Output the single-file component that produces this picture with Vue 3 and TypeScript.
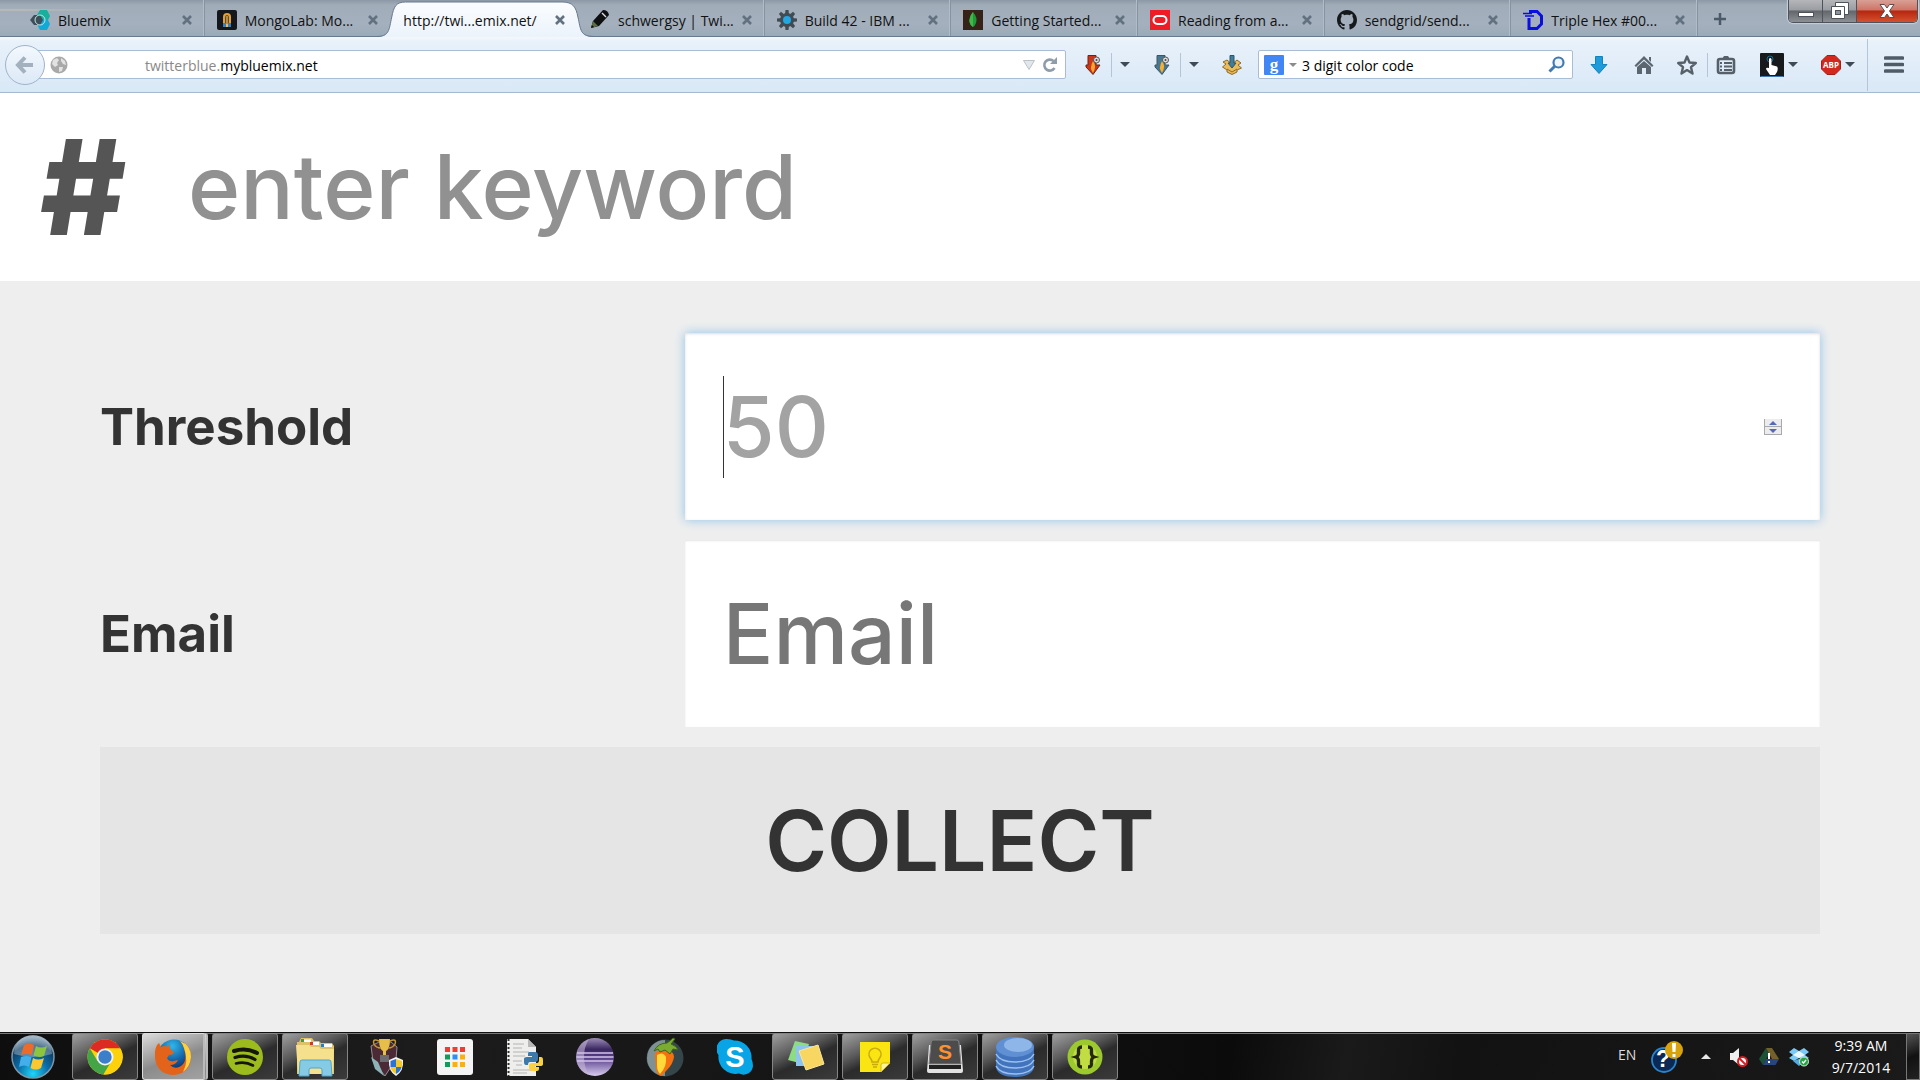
<script setup lang="ts">
import { ref } from 'vue'

interface Tab {
  icon: string
  title: string
  active?: boolean
}

const tabs: Tab[] = [
  { icon: 'bluemix', title: 'Bluemix' },
  { icon: 'mongolab', title: 'MongoLab: Mo...' },
  { icon: '', title: 'http://twi...emix.net/', active: true },
  { icon: 'pencil', title: 'schwergsy | Twi...' },
  { icon: 'gear', title: 'Build 42 - IBM ...' },
  { icon: 'leaf', title: 'Getting Started...' },
  { icon: 'oracle', title: 'Reading from a...' },
  { icon: 'github', title: 'sendgrid/send...' },
  { icon: 'hex', title: 'Triple Hex #00...' },
]

const keyword = ref('')
const threshold = ref('')
const email = ref('')
const search = ref('3 digit color code')
const gearTeeth = [0, 45, 90, 135, 180, 225, 270, 315]
const gridDots = [
  '#f23b32', '#f23b32', '#f23b32',
  '#149a5c', '#2b8ff5', '#fbb010',
  '#149a5c', '#fbb010', '#fbb010',
]

function step(by: number) {
  threshold.value = String(Number(threshold.value || 50) + by)
}
</script>

<template>
  <div class="screen">
    <header class="tabstrip">
      <nav class="tabs" aria-label="Tabs">
        <div v-for="tab in tabs" :key="tab.title" class="tab" :class="{ active: tab.active }">
          <svg v-if="tab.active" class="tab-shape" viewBox="0 0 222 37" preserveAspectRatio="none">
            <defs>
              <linearGradient id="tabFill" x1="0" y1="0" x2="0" y2="1">
                <stop offset="0" stop-color="#fbfdff" />
                <stop offset="1" stop-color="#ebf3fb" />
              </linearGradient>
            </defs>
            <path d="M0 37 C14 37 13 30 16 17 C18 7 20 2 30 2 H189 C200 2 203 7 205 17 C208 30 207 37 222 37 Z" fill="url(#tabFill)" />
            <path d="M0 36.500C14 36.500 13 30 16 17 C18 7 20 2 30 2 H189 C200 2 203 7 205 17 C208 30 207 36.500 222 36.500" fill="none" stroke="#66798d" stroke-width="1" />
          </svg>

          <svg v-if="tab.icon === 'bluemix'" class="fav" viewBox="0 0 20 20">
            <path d="M10 0 H17 L20 6 L18 10 H9 L7 5Z" fill="#17af9f" />
            <path d="M9 10 H18 L20 14 L17 20 H10 L8 16Z" fill="#12a9d6" />
            <path d="M4 5 H10 L13 10 L10 15 H4 L0 10Z" fill="#3d4d5a" />
            <circle cx="10" cy="10" r="5" fill="none" stroke="#bfe6ea" />
          </svg>
          <svg v-else-if="tab.icon === 'mongolab'" class="fav" viewBox="0 0 20 20">
            <rect width="20" height="20" rx="2" fill="#14181c" />
            <path d="M6 17 V7 Q6 3 10 3 Q14 3 14 7 V17Z" fill="#e0a040" />
            <path d="M8 14 V8 Q8 5 10 5 Q12 5 12 8 V14Z" fill="#6b4a20" />
            <path d="M6 13 H9 V17 H6Z M11 13 H14 V17 H11Z" fill="#3e7fb8" />
            <path d="M9.500 6 H10.500 V17 H9.500Z" fill="#f2d090" />
          </svg>
          <svg v-else-if="tab.icon === 'pencil'" class="fav" viewBox="0 0 20 20">
            <path d="M1 18 L3 11 L13 0 Q18 0 19 5 L9 16Z" fill="#0d0f10" />
            <path d="M12 3 L16 7" stroke="#d8dde2" stroke-width="1.500" />
            <path d="M3 11 L8 16 L1 18Z" fill="#5c6c45" />
            <path d="M1 18 L2 15 L4 17Z" fill="#111" />
          </svg>
          <svg v-else-if="tab.icon === 'gear'" class="fav" viewBox="0 0 20 20">
            <g fill="#414b53">
              <path v-for="a in gearTeeth" :key="a" d="M8 5 L8.500 0 H11.500 L12 5Z" :transform="`rotate(${a} 10 10)`" />
            </g>
            <circle cx="10" cy="10" r="5.500" fill="#22a7e0" stroke="#414b53" stroke-width="3" />
          </svg>
          <svg v-else-if="tab.icon === 'leaf'" class="fav" viewBox="0 0 20 20">
            <rect width="20" height="20" fill="#35231a" />
            <path d="M10 2 Q15 8 13 13 Q12 16 10 17 Q7 15 6.500 12 Q6 7 10 2Z" fill="#1f9a3a" />
            <path d="M10 2 Q6 7 6.500 12 Q7 15 10 17Z" fill="#43b649" />
          </svg>
          <svg v-else-if="tab.icon === 'oracle'" class="fav" viewBox="0 0 20 20">
            <rect width="20" height="20" fill="#ee1c25" />
            <rect x="3.500" y="6" width="13" height="8" rx="4" fill="none" stroke="#fff" stroke-width="2" />
          </svg>
          <svg v-else-if="tab.icon === 'github'" class="fav" viewBox="0 0 16 16">
            <path fill="#16191c" d="M8 0C3.580 0 0 3.580 0 8c0 3.540 2.290 6.530 5.470 7.590.4.070.55-.17.55-.38 0-.19-.01-.82-.01-1.490-2.010.37-2.530-.49-2.690-.94-.09-.23-.48-.94-.82-1.130-.28-.15-.68-.52-.01-.53.63-.01 1.080.58 1.230.82.72 1.210 1.870.87 2.330.66.07-.52.28-.87.51-1.070-1.780-.2-3.640-.89-3.640-3.950 0-.87.31-1.590.82-2.150-.08-.2-.36-1.020.08-2.120 0 0 .67-.21 2.200.82.64-.18 1.320-.27 2-.27s1.360.09 2 .27c1.530-1.040 2.200-.82 2.200-.82.44 1.100.16 1.920.08 2.120.51.56.82 1.270.82 2.150 0 3.070-1.870 3.750-3.650 3.950.29.25.54.73.54 1.480 0 1.070-.01 1.930-.01 2.200 0 .21.15.46.55.38A8.010 8.010 0 0 0 16 8c0-4.420-3.580-8-8-8z" />
          </svg>
          <svg v-else-if="tab.icon === 'hex'" class="fav" viewBox="0 0 20 20" fill="none" stroke="#0a0fe0">
            <path d="M6 8 V18.500 H14 L18.500 14 V6 L14 1.500 H6" stroke-width="3" />
            <path d="M0 3.500 H9 M2 6 H11" stroke-width="1.500" />
          </svg>

          <span class="tab-title">{{ tab.title }}</span>
          <button class="tab-close" type="button" aria-label="Close tab">
            <svg viewBox="0 0 10 10"><path d="M1 1 L9 9 M9 1 L1 9" stroke="#62717f" stroke-width="2.600" /></svg>
          </button>
        </div>
      </nav>
      <div class="strip-end">
        <button class="new-tab" type="button" aria-label="New tab">
          <svg viewBox="0 0 14 14"><path d="M7 1 V13 M1 7 H13" stroke="#4b5a68" stroke-width="2.500" /></svg>
        </button>
        <div class="win-buttons">
          <button class="win" type="button" aria-label="Minimize">
            <svg viewBox="0 0 18 18"><rect x="1.500" y="10.500" width="15" height="4" fill="#fff" stroke="#4d535c" /></svg>
          </button>
          <button class="win" type="button" aria-label="Restore">
            <svg viewBox="0 0 18 18" stroke="#4d535c">
              <path d="M4.500 0.500 H17.500 V12.500 H4.500Z" fill="#fff" />
              <path d="M0.500 4.500 H13.500 V16.500 H0.500Z" fill="#fff" />
              <rect x="4.500" y="8.500" width="5" height="4" fill="#8d939b" />
            </svg>
          </button>
          <button class="win close" type="button" aria-label="Close">
            <svg viewBox="0 0 18 18"><path d="M2 2.500 H6.500 L9 6 L11.500 2.500 H16 L11.500 9 L16 15.500 H11.500 L9 12 L6.500 15.500 H2 L6.500 9Z" fill="#fff" stroke="#5c4a50" /></svg>
          </button>
        </div>
      </div>
    </header>

    <div class="toolbar">
      <div class="urlbar">
        <button class="back" type="button" aria-label="Back">
          <svg viewBox="0 0 20 20"><path d="M10 2.500 L3 10 L10 17.500 M3.500 10 H18" fill="none" stroke="#a3b0bd" stroke-width="4" /></svg>
        </button>
        <svg class="globe" viewBox="0 0 18 18">
          <circle cx="9" cy="9" r="8.500" fill="#a9a9a9" />
          <path d="M3 4 L7 2 L9 4 L7 7 L8 9 L5 11 L2 8Z M11 2 L15 5 L16 9 L13 8 L11 5Z M9 11 L13 11 L12 15 L9 16Z" fill="#e2e2e2" />
        </svg>
        <a class="url" href="#"><span>twitterblue.</span>mybluemix.net</a>
        <svg class="history" viewBox="0 0 12 10"><path d="M0.500 0.500 H11.500 L6 9.500Z" fill="#e3e7ec" stroke="#b9c1ca" /></svg>
        <svg class="reload" viewBox="0 0 16 16"><path d="M12.500 11 A5.500 5.500 0 1 1 11.500 4" fill="none" stroke="#8f9dab" stroke-width="2.600" /><path d="M8 7 H15 V0Z" fill="#8f9dab" /></svg>
      </div>

      <div class="splits">
        <div class="split">
          <button class="split-main" type="button" aria-label="Download all">
            <svg class="ico" viewBox="0 0 20 20">
              <path d="M5 0.500 H13 V10 H17 L10 19.500 L3 12 V10 H5Z" fill="#c9361b" stroke="#6d2417" />
              <path d="M10 6 Q14 11 10 18 Q6 13 10 6Z" fill="#fba52a" />
              <circle cx="13.500" cy="5" r="3" fill="#ddd" stroke="#555" /><circle cx="13.500" cy="5" r="1" fill="#444" />
            </svg>
          </button>
          <button class="split-arrow" type="button" aria-label="Download options"><i class="down"></i></button>
        </div>
        <div class="split">
          <button class="split-main" type="button" aria-label="Download selection">
            <svg class="ico" viewBox="0 0 20 20">
              <path d="M5 0.500 H13 V10 H17 L10 19.500 L3 12 V10 H5Z" fill="#47788f" stroke="#3c5663" />
              <path d="M10 6 Q14 11 10 18 Q6 13 10 6Z" fill="#f7b033" />
              <circle cx="13.500" cy="5" r="3" fill="#ddd" stroke="#555" /><circle cx="13.500" cy="5" r="1" fill="#444" />
            </svg>
          </button>
          <button class="split-arrow" type="button" aria-label="Selection options"><i class="down"></i></button>
        </div>
      </div>
      <button class="tool wide" type="button" aria-label="Drop target">
        <svg class="ico" viewBox="0 0 20 20">
          <path d="M0.500 12 L4 9 L1 7 L5 5 L10 9 L15 5 L19 8 L16 10 L19.500 13 L15 15 V17 L10 19.500 L5 17 V15Z" fill="#e9bb5a" stroke="#8d6a26" />
          <path d="M5 14 L10 17 L15 14" fill="none" stroke="#8d6a26" />
          <path d="M8 0.500 H12 V8 H14 L10 13 L6 8 H8Z" fill="#3f7d9a" stroke="#2d5568" />
        </svg>
      </button>

      <div class="searchbox">
        <svg class="ico" viewBox="0 0 20 20">
          <rect width="20" height="20" rx="1" fill="#4285f4" />
          <text x="10" y="15" text-anchor="middle" font-family="Liberation Serif, serif" font-size="17" font-weight="700" fill="#fff">g</text>
        </svg>
        <i class="down small"></i>
        <input id="search" v-model="search" type="text" aria-label="Search" />
        <svg class="lens" viewBox="0 0 17 17"><circle cx="10.500" cy="6.500" r="5" fill="#eef5fc" stroke="#3f7ab2" stroke-width="2.200" /><path d="M7 10 L1.500 15.500" stroke="#3f7ab2" stroke-width="3" /></svg>
      </div>

      <button class="tool" type="button" aria-label="Downloads">
        <svg class="ico" viewBox="0 0 20 20"><path d="M6.500 1.500 H13.500 V9.500 H18 L10 18.500 L2 9.500 H6.500Z" fill="#1d9bdb" stroke="#1482bb" /></svg>
      </button>
      <button class="tool" type="button" aria-label="Home">
        <svg class="ico" viewBox="0 0 20 20" fill="#5b6670"><path d="M10 1 L19.500 10.500 L18 12 L10 4.500 L2 12 L0.500 10.500Z" /><path d="M10 6 L17 12 V19 H12 V13 H8 V19 H3 V12Z" /><path d="M15 2 H17 V7 L15 5Z" /></svg>
      </button>
      <button class="tool star" type="button" aria-label="Bookmark">
        <svg class="ico" viewBox="0 0 20 20"><path d="M10 1.500 L12.500 7.500 L18.800 8 L14 12.200 L15.500 18.500 L10 15.100 L4.500 18.500 L6 12.200 L1.200 8 L7.500 7.500Z" fill="none" stroke="#55606a" stroke-width="2.400" stroke-linejoin="round" /></svg>
      </button>
      <button class="tool list" type="button" aria-label="Bookmarks list">
        <svg class="ico" viewBox="0 0 20 20"><rect x="2" y="4" width="16" height="14" rx="2" fill="none" stroke="#55606a" stroke-width="2.600" /><path d="M6 4 L8 1 H12 L14 4Z" fill="#55606a" /><path d="M4 8 H6 M8 8 H16 M4 11.500 H6 M8 11.500 H16 M4 15 H6 M8 15 H16" stroke="#55606a" stroke-width="2" /></svg>
      </button>
      <button class="tool hand" type="button" aria-label="Gestures">
        <svg class="big" viewBox="0 0 24 24">
          <rect width="24" height="24" rx="1" fill="#17191b" /><path d="M1 23.500 H23" stroke="#3e78b5" />
          <circle cx="10" cy="6" r="3" fill="none" stroke="#196a8c" />
          <path d="M9 6 Q10 4 11.500 6 V12 L17 13.500 Q18.500 15 17 19 L15 22 H10 L6 16 Q6 14 9 15Z" fill="#fff" />
        </svg>
        <i class="down"></i>
      </button>
      <button class="tool abp" type="button" aria-label="Ad blocking">
        <svg class="ico" viewBox="0 0 20 20">
          <path d="M6 0.500 H14 L19.500 6 V14 L14 19.500 H6 L0.500 14 V6Z" fill="#d3281c" stroke="#a3201a" />
          <text x="10" y="13" text-anchor="middle" font-family="Open Sans, sans-serif" font-size="8" font-weight="700" fill="#fff">ABP</text>
        </svg>
        <i class="down"></i>
      </button>
      <button class="tool menu" type="button" aria-label="Menu">
        <svg class="ico" viewBox="0 0 20 20"><path d="M1.500 3 H18.500 M1.500 9.500 H18.500 M1.500 16 H18.500" stroke="#4f5b66" stroke-width="3.600" stroke-linecap="round" /></svg>
      </button>
    </div>

    <main class="page">
      <div class="keyword">
        <label for="keyword">#</label>
        <input id="keyword" v-model="keyword" type="text" placeholder="enter keyword" />
      </div>
      <form class="form" @submit.prevent>
        <label for="threshold">Threshold</label>
        <div class="field">
          <input id="threshold" v-model="threshold" class="focused" type="number" placeholder="50" />
          <span class="caret"></span>
          <span class="spinner">
            <button type="button" aria-label="Increase" @click="step(1)"><i class="tri up"></i></button>
            <button type="button" aria-label="Decrease" @click="step(-1)"><i class="tri"></i></button>
          </span>
        </div>
        <label for="email">Email</label>
        <div class="field">
          <input id="email" v-model="email" type="email" placeholder="Email" />
        </div>
        <button class="collect" type="submit">COLLECT</button>
      </form>
    </main>

    <footer class="taskbar">
      <button class="start" type="button" aria-label="Start">
        <svg viewBox="0 0 44 44">
          <defs>
            <radialGradient id="orb" cx=".5" cy=".9" r=".9">
              <stop offset="0" stop-color="#1fd6fb" /><stop offset=".4" stop-color="#0b6fa8" /><stop offset=".75" stop-color="#0d3d66" /><stop offset="1" stop-color="#8aa5b8" />
            </radialGradient>
          </defs>
          <circle cx="22" cy="22" r="21" fill="url(#orb)" stroke="#7d97a8" stroke-width="1.500" />
          <path d="M3 19 A19 19 0 0 1 41 19 Q22 25 3 19Z" fill="#fff" opacity=".3" />
          <path d="M13 10 Q18 7 23 10 L21 20 Q16 18 10 20Z" fill="#ee6a28" />
          <path d="M25 11 Q30 14 36 11 L33 21 Q28 23 22.500 20.500Z" fill="#8cc63e" />
          <path d="M10 22 Q15 20 20.500 22 L18 32 Q13 29 8 32Z" fill="#43aee9" />
          <path d="M22 23 Q27 26 33 23 L30 33 Q25 36 19.500 33Z" fill="#fcc832" />
        </svg>
      </button>

      <div class="apps">
        <button class="app open" type="button" aria-label="Chrome">
          <svg viewBox="0 0 36 36">
            <circle cx="18" cy="18" r="17.500" fill="#fdd20a" />
            <path d="M18 18 L2.800 9.200 A17.500 17.500 0 0 1 33.200 9.500 H18Z" fill="#db2b22" />
            <path d="M2.800 9.200 A17.500 17.500 0 0 0 16.500 35.400 L25 21 L18 18 L10.500 22Z" fill="#43a546" />
            <path d="M18 9.500 H33.500 A17.500 17.500 0 0 1 16.500 35.400 L25.500 22Z" fill="#fdd20a" />
            <circle cx="18" cy="18" r="8.500" fill="#f3f3f3" /><circle cx="18" cy="18" r="6.700" fill="#3b7fcb" />
          </svg>
        </button>
        <button class="app open stacked" type="button" aria-label="Firefox">
          <svg viewBox="0 0 36 36">
            <defs><radialGradient id="fxGlobe" cx=".45" cy=".2" r=".8"><stop offset="0" stop-color="#31b7ea" /><stop offset=".6" stop-color="#125b9f" /><stop offset="1" stop-color="#0c2354" /></radialGradient></defs>
            <circle cx="19" cy="17" r="16.500" fill="url(#fxGlobe)" />
            <path d="M2 6 L4 4 L6 8 Q10 6 13 8 L15 5 V10 L19 13 Q18 16 14 16 L12 19 Q14 23 19 22 L23 21 Q21 26 15 26 Q20 31 26 27 Q33 22 29 9 Q27 4 25 2 Q36 6 36 18 Q35 35 18 36 Q2 35 0 19 Q-1 12 2 6Z" fill="#e4631b" />
            <path d="M25 2 Q36 6 36 18 Q35 28 28 33 Q34 22 29 9 Q28 5 25 2Z" fill="#fbd142" />
          </svg>
        </button>
        <button class="app open" type="button" aria-label="Spotify">
          <svg viewBox="0 0 36 36"><circle cx="18" cy="18" r="18" fill="#9cbb1c" /><g fill="none" stroke="#14160c" stroke-linecap="round"><path d="M7 12 Q19 8 30 14" stroke-width="4" /><path d="M8 18.500 Q19 15 28 20.500" stroke-width="3.200" /><path d="M9 24.500 Q18 22 26 26.500" stroke-width="2.600" /></g></svg>
        </button>
        <button class="app open" type="button" aria-label="Explorer">
          <svg class="larger" viewBox="0 0 40 40">
            <path d="M4 5 L6 1 H17 L19 4 H24 L26 6 H37 L39 9 V37 H2 V5Z" fill="#dcc36a" />
            <path d="M8 2.500 H16 V5 H8Z M17 5 H24 V8 H17Z M27 7 H37 V10 H27Z" fill="#fff" />
            <path d="M6 2 H9 V5 H6Z" fill="#3f9d46" /><path d="M15 5 H18 V8 H15Z" fill="#d53627" /><path d="M26 7 H29 V10 H26Z" fill="#297bc5" />
            <path d="M1 8 H14 L16 10 H24 L26 12 H39 L38 37 H3Z" fill="#f4e08d" />
            <path d="M5 25 Q5 23 7 23 H34 Q36 23 36 25 L37 39 H27 V33 Q27 31 25 31 H16 Q14 31 14 33 V39 H4Z" fill="#86cbe5" stroke="#4fa5cd" />
          </svg>
        </button>
        <button class="app" type="button" aria-label="Game">
          <svg class="larger" viewBox="0 0 40 40">
            <path d="M6 9 L14 5 L26 5 L32 10 L31 22 L20 39 L8 24Z" fill="#4b2a35" stroke="#968a90" />
            <path d="M6 20 L10 32 L19 39 L13 25Z" fill="#8bb3b8" />
            <path d="M14 2 H25 Q25 12 21 14 V18 H18 V14 Q14 12 14 2Z" fill="#e6bf4a" />
            <path d="M14 4 Q7 1 9 7 Q11 11 16 11 M25 4 Q32 1 30 7 Q28 11 23 11" fill="none" stroke="#c59731" stroke-width="1.500" />
            <path d="M15 18 H24 V25 H15Z" fill="#6d6c70" />
            <path d="M31 20 L38 23 Q39 34 31 39 Q23 34 24 23Z" fill="#f3f3f3" />
            <path d="M31 22 V30 H25.500 V24Z M31 30 H36.500 Q36 34 31 37Z" fill="#2a73cf" /><path d="M31 22 L37 24 V30 H31Z M25.500 30 H31 V37 Q26 34 25.500 30Z" fill="#f4c92e" />
          </svg>
        </button>
        <button class="app" type="button" aria-label="App launcher">
          <svg viewBox="0 0 36 36"><rect width="36" height="36" rx="3" fill="#f4f4f4" /><rect v-for="(c, i) in gridDots" :key="i" :x="8 + (i % 3) * 7.500" :y="8 + Math.floor(i / 3) * 7.500" width="5" height="5" :fill="c" /></svg>
        </button>
        <button class="app" type="button" aria-label="Python editor">
          <svg class="larger" viewBox="0 0 40 40">
            <path d="M2 2 H23 L31 10 V39 H2Z" fill="#eeeeec" /><path d="M23 2 V10 H31Z" fill="#b9b9b7" />
            <path d="M3.500 2 V39" stroke="#333" stroke-width="2" stroke-dasharray="2 2" />
            <path d="M8 7 H19 M8 11 H17 M8 15 H24 M8 19 H20 M8 24 H17 M11 28 H17 M8 33 H26 M8 36 H22" stroke="#b4b4b4" />
            <path d="M24 15 H30 Q33 15 33 18 V22 Q33 25 30 25 H25 Q23 25 23 28 H21 Q19 28 19 25 V22 Q19 20 22 20 H27 V19 H23 V17 Q23 15 24 15Z" fill="#3c78aa" />
            <path d="M34 20 H36 Q38 20 38 23 V27 Q38 29 35 29 H30 V30 H34 V32 Q34 34 32 34 H27 Q24 34 24 31 V28 Q24 26 27 26 H32 Q34 26 34 23Z" fill="#fcd140" />
          </svg>
        </button>
        <button class="app" type="button" aria-label="Eclipse">
          <svg class="larger" viewBox="0 0 40 40">
            <defs><linearGradient id="ecl" x1="0" y1="0" x2="0" y2="1"><stop offset="0" stop-color="#9d8cb8" /><stop offset=".3" stop-color="#3b2760" /><stop offset=".55" stop-color="#5e4590" /><stop offset="1" stop-color="#d9cdf0" /></linearGradient></defs>
            <circle cx="20" cy="20" r="19" fill="url(#ecl)" /><path d="M1 20 A19 19 0 0 1 14 2 Q9 10 9 20 Q9 30 14 38 A19 19 0 0 1 1 20Z" fill="#c3b6d6" opacity=".6" />
            <path d="M2 16 H38 M1.500 20 H38.500 M2 24 H38" stroke="#d3c4ea" stroke-width="1.600" />
          </svg>
        </button>
        <button class="app" type="button" aria-label="FL Studio">
          <svg class="larger" viewBox="0 0 40 40">
            <circle cx="20" cy="21" r="18.500" fill="#34464a" /><path d="M2 21 A18 18 0 0 1 20 3 V39 A18 18 0 0 1 2 21Z" fill="#7f9193" />
            <path d="M10 17 Q12 12 20 14 Q29 13 29 20 Q28 27 22 33 L16 39 Q12 38 11 31 Z" fill="#f5710f" /><path d="M12 18 Q18 14 21 20 Q22 30 15 37 Q12 34 12 28Z" fill="#ffd83a" />
            <path d="M9 14 Q13 6 22 6 Q25 4 28 1 L30 2 L26 7 Q32 9 33 13 L28 12 L25 17 L20 13 L15 15 L13 12Z" fill="#7cab32" stroke="#3e6418" />
          </svg>
        </button>
        <button class="app" type="button" aria-label="Skype">
          <svg viewBox="0 0 36 36"><path d="M10 0 Q14 0 17 1.500 A17 17 0 0 1 34.500 20 Q36 23 36 27 A9.500 9.500 0 0 1 22 34.500 A17 17 0 0 1 1.500 16 A10 10 0 0 1 10 0Z" fill="#07a5e6" /><text x="18" y="28" text-anchor="middle" font-family="Liberation Sans, sans-serif" font-size="29" font-weight="700" fill="#fff">S</text></svg>
        </button>
        <button class="app open" type="button" aria-label="Sticky notes">
          <svg class="larger" viewBox="0 0 40 40"><path d="M10 4 L24 7 L18 27 L3 23Z" fill="#8edb86" /><path d="M11 9 H29 V29 H11Z" fill="#8fc4f0" /><path d="M14 14 L33 8 L39 27 L21 33Z" fill="#f7d662" stroke="#fae79a" /></svg>
        </button>
        <button class="app open" type="button" aria-label="Keep">
          <svg viewBox="0 0 36 36"><path d="M3 3 H33 V24 L24 33 H3Z" fill="#fae411" /><path d="M33 24 H26 Q24 24 24 26 V33Z" fill="#fdf39a" stroke="#d5b90d" /><path d="M15 23 Q15 21 13 18.500 A6 6 0 1 1 23 18.500 Q21 21 21 23Z M15 25.500 H21 M16 28 H20" fill="none" stroke="#c9a90c" stroke-width="1.500" /></svg>
        </button>
        <button class="app open" type="button" aria-label="Sublime Text">
          <svg viewBox="0 0 36 36">
            <path d="M0 32 L2 6 H34 L36 32 Q36 34 34 34 H2 Q0 34 0 32Z" fill="#e2e2e2" /><path d="M2 26 H34 V30 H2Z" fill="#222" />
            <path d="M4 4 Q4 1 6 1 H30 Q32 1 32 4 L34 25 H2Z" fill="#4c4c4c" stroke="#858585" />
            <text x="18" y="20" text-anchor="middle" font-family="Liberation Sans, sans-serif" font-size="21" font-weight="700" fill="#ff922e">S</text>
          </svg>
        </button>
        <button class="app open" type="button" aria-label="Database">
          <svg class="larger" viewBox="0 0 40 40">
            <path d="M1 10 V31 Q4 40 20 40 Q36 40 39 31 V10Z" fill="#4274bd" />
            <path d="M1 17 Q5 25 20 25 Q35 25 39 17 M1 23 Q5 31 20 31 Q35 31 39 23 M1 29 Q5 37 20 37 Q35 37 39 29" fill="none" stroke="#9cc0ec" stroke-width="1.500" />
            <ellipse cx="20" cy="10" rx="19" ry="10" fill="#608fd3" /><ellipse cx="23" cy="8" rx="14" ry="7" fill="#8fb6e8" />
          </svg>
        </button>
        <button class="app open" type="button" aria-label="Code editor">
          <svg viewBox="0 0 36 36"><circle cx="18" cy="18" r="17.500" fill="#9cc92d" /><circle cx="18" cy="18" r="12" fill="#c1dd43" /><path d="M15 8 Q11 8 11.500 12 Q12 17 9 18 Q12 19 11.500 24 Q11 28 15 28 M21 8 Q25 8 24.500 12 Q24 17 27 18 Q24 19 24.500 24 Q25 28 21 28" fill="none" stroke="#23290d" stroke-width="3.400" /></svg>
        </button>
      </div>

      <div class="tray">
        <span class="lang">EN</span>
        <svg class="help" viewBox="0 0 32 32">
          <circle cx="13" cy="19" r="12" fill="#0c2956" stroke="#2785cf" stroke-width="1.800" />
          <text x="12" y="26" text-anchor="middle" font-family="Liberation Sans, sans-serif" font-size="23" font-weight="700" fill="#fff">?</text>
          <circle cx="23" cy="9" r="9" fill="#d7a20b" /><path d="M21 2 H25 L24.500 11 H21.500Z M21.500 13 H24.500 V16 H21.500Z" fill="#fff" />
        </svg>
        <button class="more" type="button" aria-label="Show hidden icons"><i class="tray-up"></i></button>
        <svg class="status" viewBox="0 0 20 20"><path d="M1 6 H4 L10 1 V18 L4 13 H1Z" fill="#f0f0f0" /><circle cx="13.500" cy="14.500" r="4.500" fill="#fff" stroke="#d81f26" stroke-width="2" /><path d="M10.500 11.500 L16.500 17.500" stroke="#d81f26" stroke-width="2" /></svg>
        <svg class="status" viewBox="0 0 20 20"><path d="M7 1 L10 7 L4 18 L0 12Z" fill="#1c5138" /><path d="M7 1 H13 L20 12 H13Z" fill="#73602a" /><path d="M7 12 H20 L16.500 18 H4Z" fill="#27467d" /><path d="M9 6 H11 V12 H9Z M9 14 H11 V16 H9Z" fill="#fff" /></svg>
        <svg class="status" viewBox="0 0 20 20"><path d="M5 1 L10 4 L15 1 L20 5 L16 8 L20 11 L15 14 L10 11 L5 14 L0 11 L4 8 L0 5Z" fill="#7cc9f5" /><path d="M10 4 L16 8 L10 11 L4 8Z" fill="#e7f6ff" /><path d="M4 14 L10 12 L16 14 L10 19Z" fill="#52acdf" /><circle cx="15" cy="14.500" r="4.500" fill="#27a343" stroke="#d6ebd9" /><path d="M13 14.500 L14.500 16 L17 13" fill="none" stroke="#fff" stroke-width="1.300" /></svg>
        <div class="clock"><span>9:39 AM</span><span>9/7/2014</span></div>
        <button class="desktop" type="button" aria-label="Show desktop"></button>
      </div>
    </footer>
  </div>
</template>

<style>
body {
  margin: 0;
}
</style>

<style scoped>
.screen {
  display: flex;
  flex-direction: column;
  min-height: 100vh;
  background: #eee;
  font-family: 'Open Sans', 'Noto Sans', sans-serif;
  font-size: 14px;
  color: #111;
}
* {
  box-sizing: border-box;
}
button {
  padding: 0;
  border: 0;
  background: none;
  font: inherit;
  color: inherit;
}
svg {
  display: block;
  flex: none;
}

/* tab strip */
.tabstrip {
  display: flex;
  height: 37px;
  padding-left: 18px;
  border-bottom: 1px solid #66798d;
  background:
    radial-gradient(ellipse at 0 10px, #bcc0b4 0, transparent 120px),
    linear-gradient(#8d98a6 0, #a1acb9 5px, #a4b0bd 24px, #9caab8);
}
.tabs {
  flex: 1;
  display: grid;
  grid-template-columns: repeat(9, 1fr);
  min-width: 0;
}
.tab {
  position: relative;
  display: flex;
  align-items: center;
  gap: 8px;
  min-width: 0;
  padding: 4px 12px 0;
  border-right: 1px solid #8693a1;
  box-shadow: inset -1px 0 #b1bcc8;
}
.tab:nth-child(2),
.tab.active {
  border-color: transparent;
  box-shadow: none;
}
.tab-shape {
  position: absolute;
  top: 0;
  left: -15px;
  width: calc(100% + 33px);
  height: 37px;
}
.fav {
  width: 20px;
  height: 20px;
}
.tab-title {
  position: relative;
  flex: 1;
  min-width: 0;
  padding-top: 2px;
  overflow: hidden;
  white-space: nowrap;
  line-height: 20px;
}
.tab-close {
  position: relative;
  flex: none;
}
.tab-close svg {
  width: 10px;
  height: 10px;
}
.strip-end {
  display: flex;
  align-items: flex-start;
  justify-content: space-between;
  width: 222px;
  padding: 0 2px 0 15px;
}
.new-tab {
  padding-top: 12px;
}
.new-tab svg {
  width: 14px;
  height: 14px;
}
.win-buttons {
  display: flex;
  height: 23px;
  border: 1px solid #4c535c;
  border-top: 0;
  border-radius: 0 0 5px 5px;
  overflow: hidden;
  box-shadow: 0 0 1px 1px #c9d0d8;
}
.win {
  display: grid;
  place-items: center;
  width: 34px;
  border-right: 1px solid #4c535c;
  background: linear-gradient(#b4b6b9 0, #9a9da1 45%, #63676c 50%, #8c9095);
}
.win.close {
  width: 60px;
  border-right: 0;
  background: linear-gradient(#d9a095 0, #cd7566 45%, #b5270f 50%, #d4502f);
}
.win svg {
  width: 18px;
  height: 18px;
}

/* navigation toolbar */
.toolbar {
  display: flex;
  align-items: center;
  height: 56px;
  padding-left: 5px;
  border-bottom: 1px solid #a5bad1;
  background: linear-gradient(#f4f8fc 0, #e8f1fa 5px, #d9e8f7);
}
.urlbar {
  flex: 1;
  display: flex;
  align-items: center;
  height: 29px;
  min-width: 0;
  margin: 0 8px 0 18px;
  padding-right: 7px;
  border: 1px solid #a8bdd5;
  border-radius: 2px;
  background: #fff;
}
.back {
  display: grid;
  place-items: center;
  flex: none;
  width: 40px;
  height: 40px;
  margin-left: -19px;
  border: 1px solid #9fb3c9;
  border-radius: 50%;
  background: linear-gradient(#f3f8fd, #dce9f7);
}
.back svg {
  width: 20px;
  height: 20px;
}
.globe {
  width: 18px;
  height: 18px;
  margin-left: 5px;
}
.url {
  flex: 1;
  margin-left: 77px;
  padding-top: 2px;
  color: #000;
  text-decoration: none;
}
.url span {
  color: #888;
}
.history {
  width: 12px;
  height: 10px;
}
.reload {
  width: 16px;
  height: 16px;
  margin-left: 7px;
}
.splits {
  display: flex;
  gap: 6px;
}
.split {
  display: flex;
}
.split-main {
  display: grid;
  place-items: center;
  width: 38px;
  height: 24px;
  border-right: 1px solid #b4c5d8;
}
.split-arrow {
  display: grid;
  place-items: center;
  width: 25px;
}
.ico {
  width: 20px;
  height: 20px;
}
.big {
  width: 24px;
  height: 24px;
}
.down {
  flex: none;
  width: 0;
  border: 5px solid transparent;
  border-top-color: #3f4a54;
  border-bottom: 0;
}
.down.small {
  border-width: 4px 4px 0;
  border-top-color: #8b8b8b;
}
.tool {
  display: flex;
  align-items: center;
  justify-content: center;
  flex: none;
  width: 45px;
  height: 24px;
}
.tool.wide {
  width: 52px;
}
.tool.star {
  width: 42px;
  border-right: 1px solid #b4c5d8;
}
.tool.list {
  width: 36px;
}
.tool.hand {
  justify-content: flex-end;
  gap: 4px;
  width: 54px;
}
.tool.abp {
  justify-content: flex-end;
  gap: 4px;
  width: 70px;
  height: 52px;
  padding-right: 12px;
  border-right: 1px solid #b4c5d8;
}
.tool.menu {
  width: 52px;
}
.searchbox {
  display: flex;
  align-items: center;
  width: 315px;
  height: 29px;
  margin-right: 3px;
  padding: 0 7px 0 5px;
  border: 1px solid #a8bdd5;
  border-radius: 2px;
  background: #fff;
}
.searchbox .down {
  margin: 0 5px;
}
.searchbox input {
  flex: 1;
  min-width: 0;
  padding: 2px 0 0;
  border: 0;
  outline: 0;
  background: none;
  font: inherit;
  color: #000;
}
.lens {
  width: 17px;
  height: 17px;
}

/* page */
.page {
  flex: 1;
  font-family: Inter, 'Open Sans', sans-serif;
  color: #333;
}
.keyword {
  display: flex;
  align-items: center;
  height: 188px;
  padding: 0 40px;
  background: #fff;
}
.keyword label {
  width: 148px;
  font-size: 132px;
  font-weight: 800;
  line-height: 188px;
  color: #555;
}
.keyword input {
  flex: 1;
  min-width: 0;
  padding: 0;
  border: 0;
  outline: 0;
  background: none;
  font: 500 89px/102px Inter, 'Open Sans', sans-serif;
}
.keyword input::placeholder {
  color: #919191;
  opacity: 1;
}
.form {
  display: grid;
  grid-template-columns: 34% 66%;
  row-gap: 20px;
  align-items: center;
  padding: 52px 100px;
}
.form label {
  font-size: 51px;
  font-weight: 700;
  line-height: 60px;
}
.field {
  position: relative;
}
.field input {
  display: block;
  width: 100%;
  padding: 42px 38px;
  border: 0;
  outline: 0;
  background: #fff;
  box-shadow: inset 0 1px 2px #e4e4e4;
  font: 500 84px/103px Inter, 'Open Sans', sans-serif;
  color: #333;
  appearance: textfield;
}
.field input::placeholder {
  color: #777;
  opacity: 1;
}
.field input.focused {
  box-shadow: inset 0 1px 3px #ddd, 0 0 10px #8fc3e8;
}
.field input.focused::placeholder {
  color: #a3a3a3;
}
.caret {
  position: absolute;
  top: 43px;
  left: 38px;
  width: 1px;
  height: 102px;
  background: #333;
}
.spinner {
  position: absolute;
  top: 86px;
  right: 38px;
  display: flex;
  flex-direction: column;
  width: 18px;
  border: 1px solid #a9a9ad;
  border-top: 0;
}
.spinner button {
  display: grid;
  place-items: center;
  height: 7px;
  background: #ececee;
}
.spinner button + button {
  height: 8px;
  border-top: 1px solid #a9a9ad;
}
.tri {
  border: 4px solid transparent;
  border-top-color: #5868b8;
  border-bottom: 0;
}
.tri.up {
  border: 4px solid transparent;
  border-bottom-color: #5868b8;
  border-top: 0;
}
.collect {
  grid-column: 1 / -1;
  height: 187px;
  background: #e5e5e5;
  font-size: 84px;
  font-weight: 600;
  color: #333;
}

/* taskbar */
.taskbar {
  display: flex;
  height: 48px;
  border-top: 1px solid #111;
  box-shadow: inset 0 1px #777;
  background: linear-gradient(100deg, #0e0e0e 0, #1c1c1c 22%, #101010 55%, #0b0b0b 64%, #1a1a1a 70%, #121212 76%, #1a1a1a);
}
.start {
  display: grid;
  place-items: center;
  width: 72px;
  padding-right: 6px;
}
.start svg {
  width: 44px;
  height: 44px;
}
.apps {
  flex: 1;
  display: flex;
  gap: 4px;
}
.app {
  display: grid;
  place-items: center;
  width: 66px;
  height: 47px;
}
.app svg {
  width: 36px;
  height: 36px;
}
.app svg.larger {
  width: 40px;
  height: 40px;
}
.app.open {
  border: 1px solid #858585;
  border-radius: 3px;
  background: linear-gradient(155deg, #a0a0a0 0, #5c5c5c 35%, #2b2b2b 55%, #3b3b3b);
}
.app.open.stacked {
  border-color: #ddd;
  border-right: 5px double #bbb;
  background: linear-gradient(160deg, #dcdcdc, #8b8b8b 55%, #a2a2a2);
}
.tray {
  display: flex;
  align-items: center;
  color: #fff;
}
.lang {
  width: 33px;
  padding-bottom: 4px;
  color: #ddd;
}
.help {
  width: 32px;
  height: 32px;
}
.more {
  display: grid;
  place-items: center;
  width: 46px;
  height: 40px;
}
.tray-up {
  border: 5px solid transparent;
  border-bottom-color: #e8e8e8;
  border-top: 0;
}
.status {
  width: 20px;
  height: 20px;
  margin-right: 10px;
}
.clock {
  display: flex;
  flex-direction: column;
  align-items: center;
  width: 84px;
  line-height: 22px;
}
.desktop {
  width: 14px;
  height: 47px;
  margin-left: 3px;
  border: 1px solid #777;
  background: linear-gradient(160deg, #555, #111 50%, #222);
}
</style>
